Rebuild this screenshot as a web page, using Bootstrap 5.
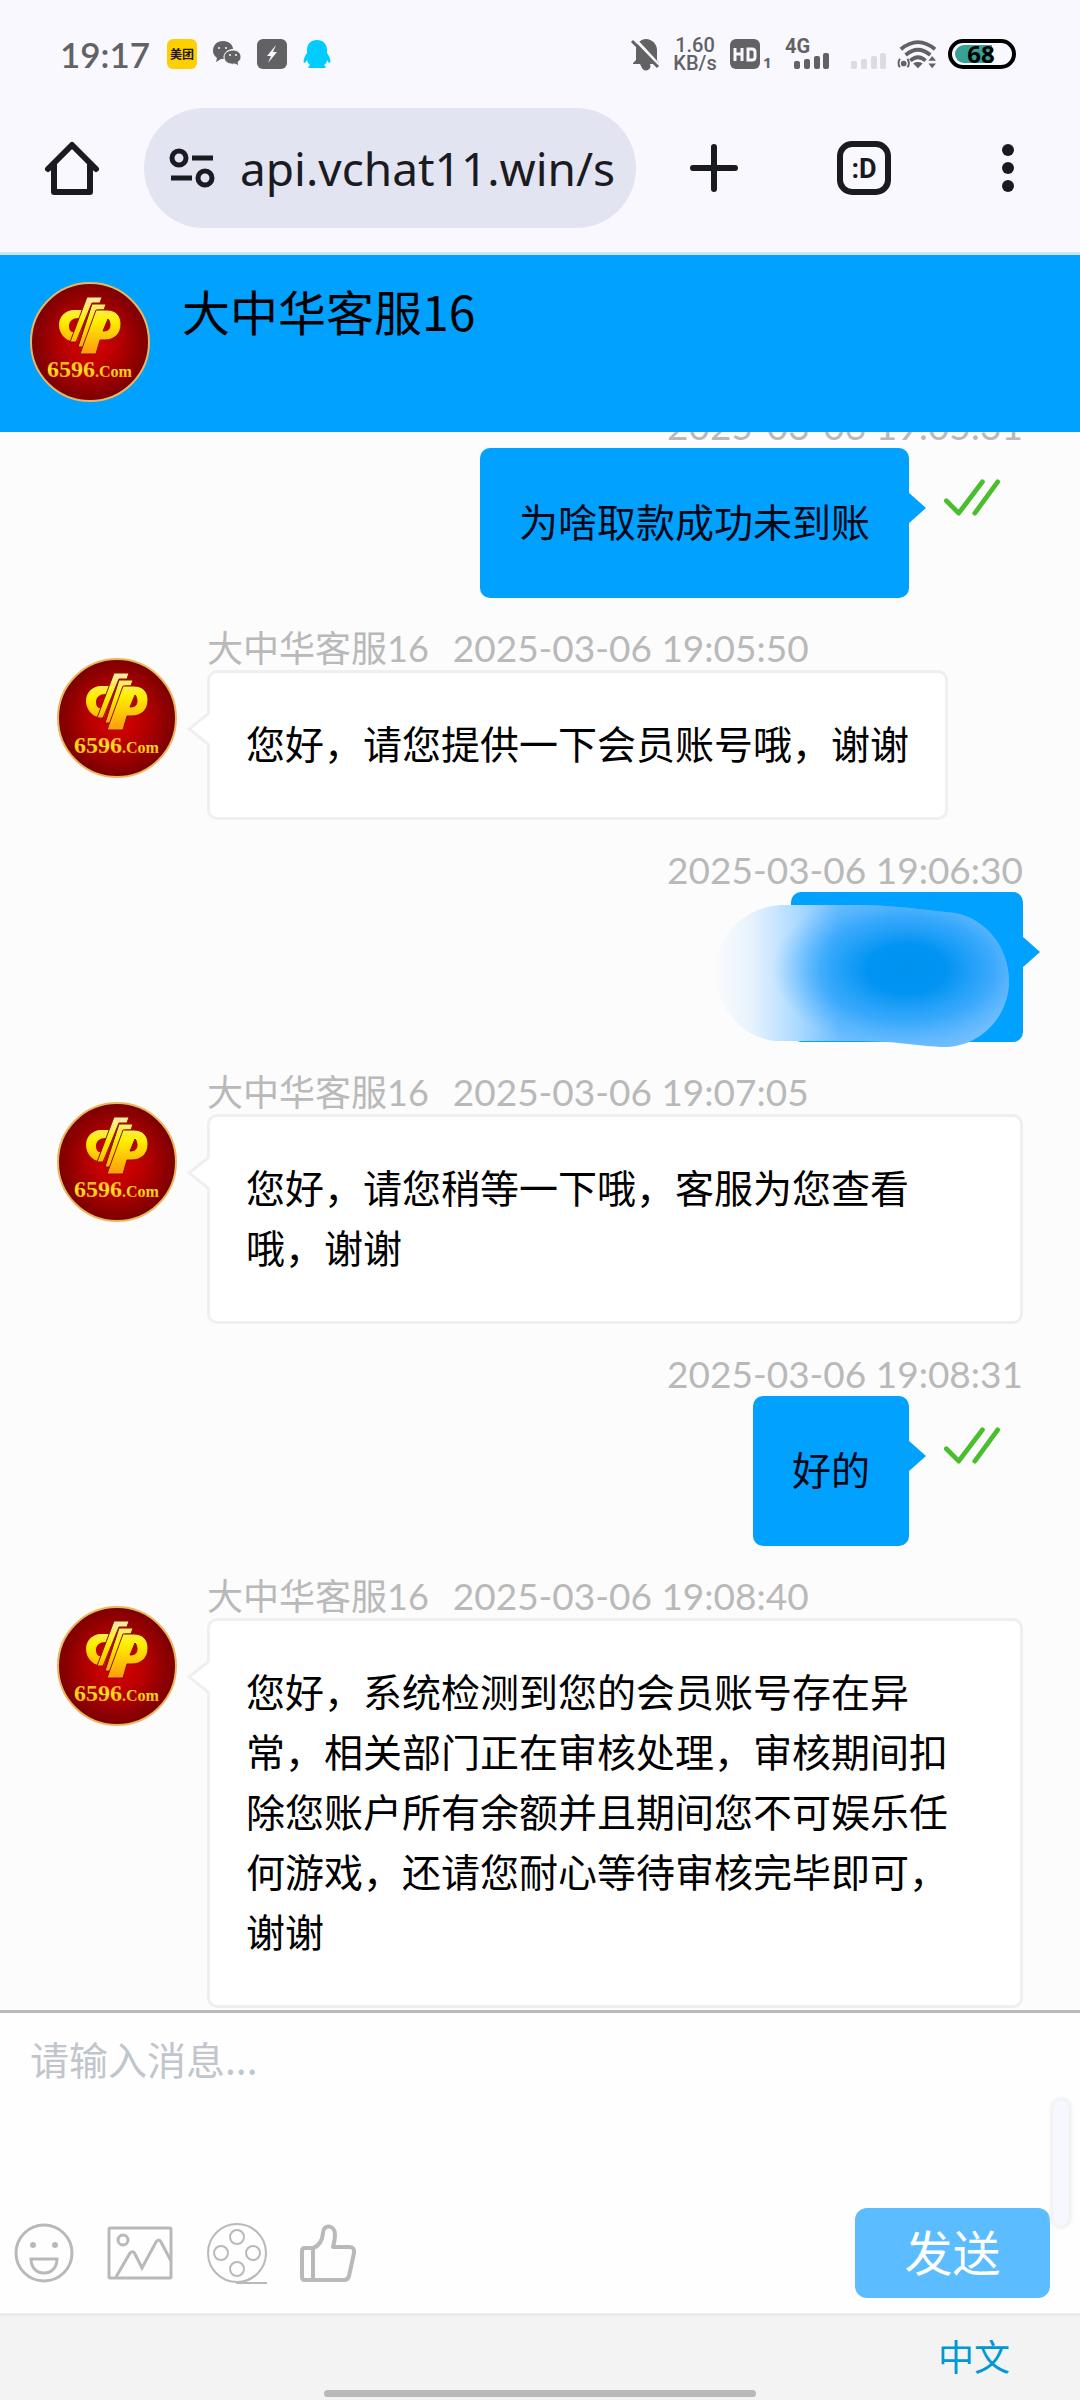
<!DOCTYPE html>
<html lang="zh-CN">
<head>
<meta charset="utf-8">
<meta name="viewport" content="width=device-width, initial-scale=1">
<title>大中华客服16</title>
<link href="https://cdn.jsdelivr.net/npm/bootstrap@5.3.0/dist/css/bootstrap.min.css" rel="stylesheet">
<style>
  body { font-family: "Noto Sans", "Noto Sans CJK SC", sans-serif; color: #000; background: #fcfcfc; }
  svg { display: block; flex: none; overflow: visible; }
  button { background: none; border: 0; padding: 0; color: inherit; }
  .browser-top { background: #f9f8ff; border-bottom: 3px solid #cbe6fb; }
  .status-bar { height: 108px; padding: 0 64px 0 60px; color: #626265; }
  .status-right { gap: 12px; }
  .clock { font: 600 35px/44px Lato, sans-serif; width: 107px; }
  .net-speed { font: 500 20px/18px Roboto, sans-serif; width: 46px; }
  .toolbar { padding: 0 66px 24px 45px; color: #1a1b21; }
  .address { height: 120px; min-width: 0; margin: 0 54px 0 45px; padding: 0 22px 0 25px; background: #e3e4f1; }
  .address input { width: 0; font-size: 46px; line-height: 64px; color: #1a1b21; background: none; border: 0; outline: 0; padding: 0; margin-left: 25px; min-width: 0; }
  .tab-btn { margin-left: 99px; }
  .more-btn { margin-left: 111px; }
  .chat-head { background: #00a1ff; height: 177px; padding: 27px 30px; }
  .chat-title { font: 400 48px/56px "Noto Sans CJK SC", sans-serif; margin: 0; }
  .chat-log { min-height: 0; padding: 0 57px 2px; }
  .msg { margin-top: 28px; flex: none; }
  .msg-meta { font: 400 36px/44px Lato, "Noto Sans CJK SC", sans-serif; color: #b9b9b9; }
  .msg-meta time { font-size: 37px; }
  .msg-in { padding-left: 150px; }
  .msg-in .msg-avatar { position: absolute; left: 0; top: 32px; }
  .bubble { position: relative; font: 400 39px/60px "Noto Sans CJK SC", sans-serif; border-radius: 10px; width: fit-content; }
  .bubble p { margin: 0; }
  .bubble-in { background: #fff; border: 3px solid #efefef; padding: 39px 36px 45px; }
  .bubble-out { background: #00a1ff; padding: 42px 39px 48px; color: #000818; }
  .tip { position: absolute; }
  .tip-in { left: -23px; top: 39px; }
  .tip-out { right: -17px; top: 44px; }
  .hidden-text { min-width: 232px; }
  .smudge { position: absolute; right: 14px; top: 7px; }
  .ticks { margin: 30px 22px 0 34px; }
  .composer { background: #fefefe; border-top: 3px solid #b9b9b9; border-bottom: 3px solid #ebebeb; height: 306px; }
  .composer textarea { font: 400 39px/60px "Noto Sans CJK SC", sans-serif; border: 0; outline: 0; resize: none; background: none; padding: 15px 30px 0; height: 195px; width: 100%; }
  .composer textarea::placeholder { color: #c1c5cc; opacity: 1; }
  .tools { padding: 0 30px 0 14px; color: #b9b9b9; }
  .tool-btn { margin-left: 33px; }
  .send-btn, .send-btn:hover { width: 195px; height: 90px; border: 0; border-radius: 12px; background: #5bbcff; color: #fff; font: 400 48px/60px "Noto Sans CJK SC", sans-serif; padding: 0 0 6px; }
  .drag-handle { position: absolute; right: 11px; top: 87px; width: 16px; height: 126px; border-radius: 8px; background: #f6f7ff; box-shadow: 0 0 4px 2px #ebebed; }
  .page-foot { background: #f3f3f3; height: 84px; padding: 9px 70px 0; }
  .lang { font: 400 36px/60px "Noto Sans CJK SC", sans-serif; color: #0099d3; text-decoration: none; }
  .home-bar { position: absolute; left: 30%; width: 40%; bottom: 3px; height: 7px; border-radius: 4px; background: #b9b9b9; }
</style>
</head>
<body>
<svg width="0" height="0" class="position-absolute" aria-hidden="true">
  <defs>
    <radialGradient id="red" cx=".5" cy=".5" r=".52"><stop offset="0" stop-color="#e20000"/><stop offset=".45" stop-color="#b80000"/><stop offset="1" stop-color="#760000"/></radialGradient>
    <linearGradient id="gold" x1="0" y1="16" x2="0" y2="72" gradientUnits="userSpaceOnUse"><stop offset="0" stop-color="#ffe9a8"/><stop offset=".4" stop-color="#ffef00"/><stop offset="1" stop-color="#ff9a10"/></linearGradient>
    <linearGradient id="goldtext" x1="0" y1="0" x2="0" y2="1"><stop offset="0" stop-color="#ff9a20"/><stop offset=".55" stop-color="#ffe11a"/><stop offset="1" stop-color="#ff8a20"/></linearGradient>
    <symbol id="avatar" viewBox="0 0 120 120">
      <circle cx="60" cy="60" r="59" fill="url(#red)" stroke="#e8b860" stroke-width="2"/>
      <path fill="url(#gold)" d="M53 28H44C35 28 29 35 29 43s6 16 14 16h4l6-16h-5l-3 7c-4 1-6-2-6-6 0-5 4-8 9-8h2z"/>
      <path fill="url(#gold)" stroke="#8a1000" stroke-width="1" d="M57 15h15l-2 6h-8L46 60h-6z"/>
      <path fill="url(#gold)" stroke="#8a1000" stroke-width="1" d="M62 22h14l-2 6h-6L54 65h-6z"/>
      <path fill="url(#gold)" stroke="#8a1000" stroke-width="1" fill-rule="evenodd" d="M66 28h11c9 0 14 6 14 14 0 10-7 16-16 16h-5l-4 14H50zm12 9l-5 12c5 0 7-2 7-6 0-3-1-5-2-6z"/>
      <text x="17" y="95" font-family="Liberation Serif, serif" font-weight="700" font-size="24" fill="url(#goldtext)">6596<tspan font-size="16">.Com</tspan></text>
    </symbol>
    <symbol id="ticks" viewBox="0 0 60 40"><path d="M3 24l13 13L41 4M33 37L57 4" fill="none" stroke="#4bbe2d" stroke-width="5" stroke-linecap="round" stroke-linejoin="round"/></symbol>
    <symbol id="tipin" viewBox="0 0 23 34"><path d="M23 2L2 17l21 15z" fill="#fff"/><path d="M21 2L2 17l19 15" fill="none" stroke="#efefef" stroke-width="3"/></symbol>
    <symbol id="tipout" viewBox="0 0 18 32"><path d="M0 0l18 16L0 32z" fill="#00a1ff"/></symbol>
  </defs>
</svg>

<div class="vh-100 d-flex flex-column overflow-hidden">
  <div class="browser-top flex-shrink-0">
    <div class="status-bar d-flex align-items-center">
      <span class="clock">19:17</span>
      <svg width="30" height="30" viewBox="0 0 30 30"><rect width="30" height="30" rx="6" fill="#ffd000"/><text x="15" y="20" text-anchor="middle" font-family="Noto Sans CJK SC, sans-serif" font-weight="700" font-size="12" fill="#231800">美团</text></svg>
      <svg class="ms-3" width="28" height="26" viewBox="0 0 28 26" fill="currentColor"><path d="M10 0c6 0 10 4 10 8-5 0-10 4-9 10H8l-5 3 1-4C1 15 0 12 0 10 0 4 4 0 10 0z"/><path d="M20 9c5 0 8 3 8 7 0 2-1 4-3 5l1 4-4-2c-6 1-11-2-11-7 0-4 4-7 9-7z" stroke="#f9f8ff"/><g fill="#f9f8ff"><circle cx="6" cy="7" r="1"/><circle cx="13" cy="7" r="1"/><circle cx="17" cy="14" r="1"/><circle cx="23" cy="14" r="1"/></g></svg>
      <svg class="ms-3" width="30" height="30" viewBox="0 0 30 30"><rect width="30" height="30" rx="6" fill="currentColor"/><path d="M19 6l-9 11h4l-3 7 9-11h-4z" fill="#f9f8ff"/></svg>
      <svg class="ms-3" width="28" height="30" viewBox="0 0 28 30" fill="#0cf"><path d="M14 1C8 1 4 5 4 11v3c-3 4-4 8-3 10 1 0 2-1 3-3 0 2 2 4 3 5-2 1-2 3-1 3h16c1 0 1-2-1-3 2-1 3-3 3-5 1 2 2 3 3 3 1-2 0-6-3-10v-3c0-6-4-10-10-10z"/></svg>

      <div class="status-right ms-auto d-flex align-items-center">
        <svg width="28" height="32" viewBox="0 0 28 32"><path fill="currentColor" d="M14 1c6 0 11 5 11 11v10l2 3v1H18a4 4 0 0 1-8 4l-2-4H1v-1l3-3V12C4 6 8 1 14 1z"/><path d="M2 0l25 27" stroke="#f9f8ff" stroke-width="3"/><path d="M0 3l26 26" stroke="currentColor" stroke-width="3"/></svg>
        <div class="net-speed d-flex flex-column align-items-center"><span>1.60</span><span>KB/s</span></div>
        <svg width="42" height="30" viewBox="0 0 42 30"><rect width="30" height="30" rx="6" fill="currentColor"/><path d="M5 9v13M12 9v13M5 15h7M18 10h4q3 0 3 3v5q0 3-3 3h-4z" fill="none" stroke="#f9f8ff" stroke-width="3"/><text x="33" y="29" font-family="Noto Sans, sans-serif" font-weight="700" font-size="15" fill="currentColor">1</text></svg>
        <svg width="46" height="34" viewBox="0 0 46 34" fill="currentColor"><text x="1" y="16" font-family="Roboto, sans-serif" font-weight="700" font-size="20">4G</text><rect x="10" y="24" width="6" height="8" rx="2"/><rect x="20" y="22" width="6" height="10" rx="2"/><rect x="30" y="19" width="6" height="13" rx="2"/><rect x="39" y="16" width="6" height="16" rx="2"/></svg>
        <svg width="44" height="34" viewBox="0 0 44 34" fill="#dcdbe1"><rect x="9" y="24" width="6" height="8" rx="2"/><rect x="19" y="22" width="6" height="10" rx="2"/><rect x="29" y="19" width="6" height="13" rx="2"/><rect x="38" y="16" width="6" height="16" rx="2"/></svg>
        <svg width="38" height="30" viewBox="0 0 40 30" fill="none" stroke="currentColor" stroke-width="4"><path d="M3 10Q21-5 39 10M8 16q13-11 26 0M13 22q8-7 16 0"/><path d="M16 25q5-3 10 0l-5 5z" fill="currentColor" stroke="none"/><circle cx="6" cy="25" r="3" fill="currentColor" stroke="none"/><path d="M2 20q-3 5 0 9M10 20q3 5 0 9" stroke-width="2"/><path d="M36 17l4 5h-8zM36 30l4-5h-8z" fill="currentColor" stroke="none"/></svg>
        <svg width="68" height="30" viewBox="0 0 68 30"><rect x="2" y="2" width="64" height="26" rx="13" fill="#f9f8ff" stroke="#000" stroke-width="4"/><path d="M16 6h28v18H16a9 9 0 0 1 0-18z" fill="#38a095"/><text x="33" y="24" text-anchor="middle" font-family="Noto Sans, sans-serif" font-weight="700" font-size="24" fill="#000">68</text></svg>
      </div>
    </div>
    <div class="toolbar d-flex align-items-center">
      <button type="button" aria-label="主页"><svg width="54" height="54" viewBox="0 0 54 54" fill="none" stroke="currentColor" stroke-width="6" stroke-linecap="round" stroke-linejoin="round"><path d="M3 28L27 4l24 24"/><path d="M9 23v28h36V23"/></svg></button>
      <div class="address rounded-pill d-flex align-items-center flex-grow-1">
        <svg width="46" height="38" viewBox="0 0 46 38" fill="none" stroke="#1a1b21" stroke-width="5"><circle cx="10" cy="9" r="7"/><circle cx="36" cy="29" r="7"/><path d="M23 9h21M2 29h21"/></svg>
        <input class="flex-grow-1" type="text" aria-label="网址" value="api.vchat11.win/s">
      </div>
      <button type="button" aria-label="新标签页"><svg width="48" height="48" viewBox="0 0 48 48" stroke="currentColor" stroke-width="6" stroke-linecap="round"><path d="M24 3v42M3 24h42"/></svg></button>
      <button type="button" class="tab-btn" aria-label="标签页"><svg width="54" height="54" viewBox="0 0 54 54"><rect x="3" y="3" width="48" height="48" rx="12" fill="none" stroke="currentColor" stroke-width="6"/><text x="27" y="37" text-anchor="middle" font-family="Roboto, sans-serif" font-weight="700" font-size="27" fill="currentColor">:D</text></svg></button>
      <button type="button" class="more-btn" aria-label="更多"><svg width="12" height="48" viewBox="0 0 12 48" fill="currentColor"><circle cx="6" cy="6" r="6"/><circle cx="6" cy="24" r="6"/><circle cx="6" cy="42" r="6"/></svg></button>
    </div>
  </div>

  <header class="chat-head flex-shrink-0 d-flex">
    <svg width="120" height="120" role="img" aria-label="6596.Com"><use href="#avatar"/></svg>
    <h1 class="chat-title ms-4 ps-2">大中华客服16</h1>
  </header>

  <main class="chat-log flex-grow-1 overflow-hidden d-flex flex-column justify-content-end">
    <div class="msg">
      <div class="msg-meta text-end"><time>2025-03-06 19:05:31</time></div>
      <div class="d-flex justify-content-end align-items-start">
        <div class="bubble bubble-out"><p>为啥取款成功未到账</p><svg class="tip tip-out" width="18" height="32"><use href="#tipout"/></svg></div>
        <svg class="ticks" width="58" height="38"><use href="#ticks"/></svg>
      </div>
    </div>
    <div class="msg msg-in position-relative">
      <svg class="msg-avatar" width="120" height="120"><use href="#avatar"/></svg>
      <div class="msg-meta d-flex"><span>大中华客服16</span><time class="ms-4">2025-03-06 19:05:50</time></div>
      <div class="bubble bubble-in"><svg class="tip tip-in" width="23" height="34"><use href="#tipin"/></svg><p>您好，请您提供一下会员账号哦，谢谢</p></div>
    </div>
    <div class="msg">
      <div class="msg-meta text-end"><time>2025-03-06 19:06:30</time></div>
      <div class="d-flex justify-content-end">
        <div class="bubble bubble-out hidden-text"><p>&nbsp;</p><svg class="tip tip-out" width="18" height="32"><use href="#tipout"/></svg>
          <svg class="smudge" width="294" height="152" viewBox="0 0 294 152">
            <defs>
              <clipPath id="pill"><path d="M66 6H150C190 7 215 12 240 14C270 19 294 48 294 82C294 120 262 150 226 148C195 146 180 142 140 142H60C25 138 2 108 0 72C0 38 28 8 66 6z"/></clipPath>
              <linearGradient id="fade"><stop offset="0" stop-color="#fafbfc"/><stop offset=".12" stop-color="#e8f3fd"/><stop offset=".28" stop-color="#acdaff"/><stop offset=".42" stop-color="#6fbeff"/><stop offset=".8" stop-color="#6fbeff"/><stop offset="1" stop-color="#7cc1fd"/></linearGradient>
              <radialGradient id="core"><stop offset="0" stop-color="#0092ef"/><stop offset=".3" stop-color="#0294f2"/><stop offset=".65" stop-color="#1d9efa" stop-opacity=".65"/><stop offset="1" stop-color="#40abfd" stop-opacity="0"/></radialGradient>
            </defs>
            <g clip-path="url(#pill)"><rect width="294" height="152" fill="url(#fade)"/><ellipse cx="192" cy="70" rx="134" ry="82" fill="url(#core)"/></g>
          </svg>
        </div>
      </div>
    </div>
    <div class="msg msg-in position-relative">
      <svg class="msg-avatar" width="120" height="120"><use href="#avatar"/></svg>
      <div class="msg-meta d-flex"><span>大中华客服16</span><time class="ms-4">2025-03-06 19:07:05</time></div>
      <div class="bubble bubble-in"><svg class="tip tip-in" width="23" height="34"><use href="#tipin"/></svg><p>您好，请您稍等一下哦，客服为您查看哦，谢谢</p></div>
    </div>
    <div class="msg">
      <div class="msg-meta text-end"><time>2025-03-06 19:08:31</time></div>
      <div class="d-flex justify-content-end align-items-start">
        <div class="bubble bubble-out"><p>好的</p><svg class="tip tip-out" width="18" height="32"><use href="#tipout"/></svg></div>
        <svg class="ticks" width="58" height="38"><use href="#ticks"/></svg>
      </div>
    </div>
    <div class="msg msg-in position-relative">
      <svg class="msg-avatar" width="120" height="120"><use href="#avatar"/></svg>
      <div class="msg-meta d-flex"><span>大中华客服16</span><time class="ms-4">2025-03-06 19:08:40</time></div>
      <div class="bubble bubble-in"><svg class="tip tip-in" width="23" height="34"><use href="#tipin"/></svg><p>您好，系统检测到您的会员账号存在异常，相关部门正在审核处理，审核期间扣除您账户所有余额并且期间您不可娱乐任何游戏，还请您耐心等待审核完毕即可，谢谢</p></div>
    </div>
  </main>

  <form class="composer position-relative flex-shrink-0">
    <textarea class="d-block" aria-label="消息" placeholder="请输入消息..."></textarea>
    <div class="tools d-flex align-items-center">
      <button type="button" aria-label="表情"><svg width="60" height="62" viewBox="0 0 60 62" fill="none" stroke="currentColor" stroke-width="3"><circle cx="30" cy="31" r="28"/><circle cx="19" cy="23" r="3" fill="currentColor" stroke="none"/><circle cx="41" cy="23" r="3" fill="currentColor" stroke="none"/><path d="M17 37h26c0 8-5 14-13 14s-13-6-13-14z"/></svg></button>
      <button type="button" class="tool-btn" aria-label="图片"><svg width="66" height="54" viewBox="0 0 66 54" fill="none" stroke="currentColor" stroke-width="3"><rect x="2" y="2" width="62" height="50" rx="1"/><circle cx="16" cy="14" r="5"/><path d="M9 51l14-24q3-3 5 1l7 14 14-26q3-4 5 0l10 19"/></svg></button>
      <button type="button" class="tool-btn" aria-label="视频"><svg width="62" height="64" viewBox="0 0 62 64" fill="none" stroke="currentColor" stroke-width="2"><circle cx="31" cy="32" r="29"/><circle cx="31" cy="16" r="7"/><circle cx="31" cy="48" r="7"/><circle cx="15" cy="32" r="7"/><circle cx="47" cy="32" r="7"/><path d="M30 62h31M36 61q8-2 12-6"/></svg></button>
      <button type="button" class="tool-btn" aria-label="点赞"><svg width="56" height="60" viewBox="2 0 56 60" fill="none" stroke="currentColor" stroke-width="4" stroke-linejoin="round"><path d="M6 25h8q9-3 10-15c0-9 12-9 12 2 0 5-1 8-2 12h16q6 0 5 6l-5 23q-1 4-5 4H6q-3 0-3-3V28q0-3 3-3zM14 25v32"/></svg></button>
      <button type="submit" class="btn send-btn ms-auto">发送</button>
    </div>
    <div class="drag-handle"></div>
  </form>

  <footer class="page-foot position-relative flex-shrink-0 text-end">
    <a class="lang" href="#">中文</a>
    <div class="home-bar"></div>
  </footer>
</div>
<script src="https://cdn.jsdelivr.net/npm/bootstrap@5.3.0/dist/js/bootstrap.bundle.min.js"></script>
</body>
</html>
